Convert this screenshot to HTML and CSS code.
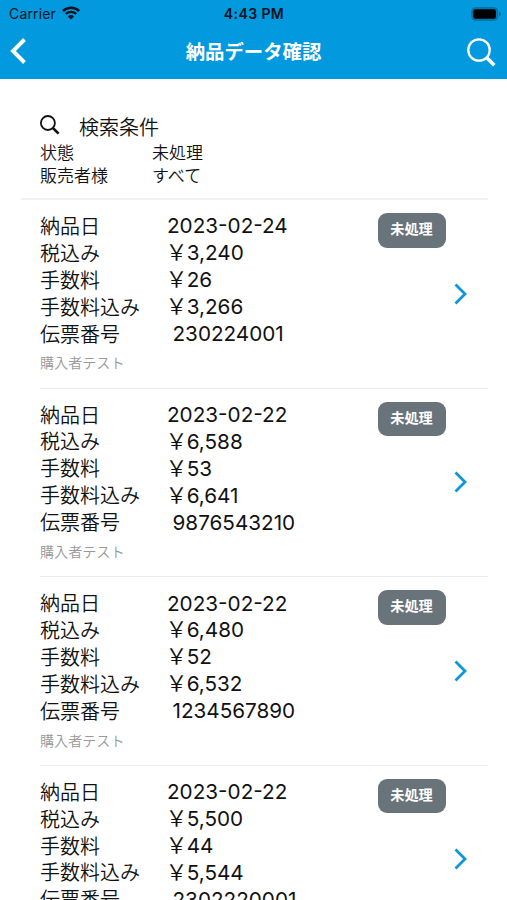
FILE: index.html
```html
<!DOCTYPE html>
<html lang="ja">
<head>
<meta charset="utf-8">
<title>納品データ確認</title>
<link rel="stylesheet" href="styles.css">
</head>
<body>
<header class="header">
  <div class="status">
    <div class="carrier"><span>Carrier</span>
      <svg width="18" height="14" viewBox="0 0 18 14" fill="none" stroke="#03131d"><path d="M.9 5a11.500 11.500 0 0 1 16.200 0" stroke-width="2.500"/><path d="M3.800 8a7.400 7.400 0 0 1 10.400 0" stroke-width="2.300"/><path d="M9 13.500 5.900 10.400a4.400 4.400 0 0 1 6.200 0z" fill="#03131d" stroke="none"/></svg>
    </div>
    <div class="time">4:43 PM</div>
    <svg class="battery" width="30" height="14" viewBox="0 0 30 14"><rect x=".7" y=".7" width="26" height="12.600" rx="3.500" fill="#0878ad" stroke="#086da0"/><rect x="2.300" y="2.300" width="22.600" height="9.400" rx="2" fill="#000"/><path d="M28 4.700q2 .6 2 2.300t-2 2.300z" fill="#086da0"/></svg>
  </div>
  <nav class="nav">
    <svg width="16" height="26" viewBox="0 0 16 26" fill="none" stroke="#fff" stroke-width="3.900"><path d="M14.500 1.500 3 13l11.500 11.500"/></svg>
    <h1 class="title">納品データ確認</h1>
    <svg width="29" height="29" viewBox="0 0 29 29" fill="none" stroke="#fff"><circle cx="12" cy="12" r="10.700" stroke-width="2.300"/><path d="m19.500 19.500 7.800 7.800" stroke-width="3.600"/></svg>
  </nav>
</header>
<main>
  <section class="search">
    <div class="search-head">
      <svg width="20" height="20" viewBox="0 0 20 20" fill="none" stroke="#111"><circle cx="7.900" cy="8" r="7" stroke-width="1.800"/><path d="m12.900 13 5.700 5.700" stroke-width="2.500"/></svg>
      <span>検索条件</span>
    </div>
    <dl class="filters"><dt>状態</dt><dd>未処理</dd><dt>販売者様</dt><dd>すべて</dd></dl>
  </section>
  <ul class="list" id="list"></ul>
</main>
<script src="app.js"></script>
</body>
</html>
```

FILE: styles.css
```css
* { box-sizing: border-box; margin: 0; padding: 0; }
html, body { height: 900px; overflow: hidden; }
body { background: #fff; color: #111; font-family: Inter, "Noto Sans CJK JP", sans-serif; }
main { height: 821px; overflow: hidden; }
svg { display: block; flex: none; }
.header { height: 79px; background: #0299df; }
.status { height: 27px; padding: 0 6px 0 9px; display: grid; grid-template-columns: 1fr auto 1fr; align-items: center; color: #03131d; font-size: 14px; }
.carrier { display: flex; align-items: center; gap: 6px; letter-spacing: .15px; }
.carrier svg { margin-top: -1px; }
.time { font-weight: 600; font-size: 14px; letter-spacing: .4px; margin-right: 2px; }
.battery { justify-self: end; }
.nav { height: 50px; padding: 0 11px 0 10px; display: grid; grid-template-columns: 1fr auto 1fr; align-items: center; }
.nav svg:first-child { margin-top: -2px; }
.nav svg:last-child { justify-self: end; margin-top: 1px; }
.title { color: #fff; font-size: 19.400px; line-height: 28px; font-weight: 700; margin-left: 1px; }
.search { height: 121px; margin-left: 21px; margin-right: 19px; padding: 34px 0 0 19px; border-bottom: 2px solid #f1f1f1; }
.search-head { height: 29px; display: flex; align-items: center; gap: 19px; font-size: 20px; font-weight: 350; line-height: 26px; }
.search-head svg { margin-top: -6px; }
.filters { display: grid; grid-template-columns: 112px 1fr; font-size: 17px; line-height: 23px; font-weight: 350; }
.list { list-style: none; }
.item { height: 188.6px; margin: 0 19px 0 40px; padding-top: 13px; border-bottom: 1.6px solid #ededed; display: grid; grid-template-columns: 337.500px 68px 1fr; align-items: start; }
.fields { margin-top: 1px; display: grid; grid-template-columns: 127px 1fr; grid-auto-rows: 26.9px; line-height: 26.9px; font-size: 20px; }
.fields dt { font-weight: 350; }
.fields dd { font-size: 20.7px; margin-top: -.6px; }
.fields dd.num { padding-left: 5.500px; }
.yen { font-size: 22px; font-weight: 350; line-height: 1; margin-left: -1.500px; margin-right: -.8px; }
.buyer { margin-top: 5px; color: #999; font-size: 14.100px; line-height: 20px; font-weight: 350; }
.badge { height: 34.500px; border-radius: 9px; background: #68737a; color: #fff; font-size: 14.200px; font-weight: 700; line-height: 32px; text-align: center; }
.arrow { margin: 69.500px 0 0 8.500px; }
```

FILE: app.js
```js
const rows = [
  ["2023-02-24", "3,240", "26", "3,266", "230224001"],
  ["2023-02-22", "6,588", "53", "6,641", "9876543210"],
  ["2023-02-22", "6,480", "52", "6,532", "1234567890"],
  ["2023-02-22", "5,500", "44", "5,544", "2302220001"]
];
const yen = (v) => `<span class="yen">\uffe5</span>${v}`;
document.getElementById("list").innerHTML = rows.map(([date, price, fee, total, no]) => `
<li class="item">
  <div>
    <dl class="fields">
      <dt>納品日</dt><dd>${date}</dd>
      <dt>税込み</dt><dd>${yen(price)}</dd>
      <dt>手数料</dt><dd>${yen(fee)}</dd>
      <dt>手数料込み</dt><dd>${yen(total)}</dd>
      <dt>伝票番号</dt><dd class="num">${no}</dd>
    </dl>
    <p class="buyer">購入者テスト</p>
  </div>
  <span class="badge">未処理</span>
  <svg class="arrow" width="14" height="22" viewBox="0 0 14 22" fill="none" stroke="#0d96db" stroke-width="2.800"><path d="m1.500 1.500 9.500 9.500-9.500 9.500"/></svg>
</li>`).join("");
```
